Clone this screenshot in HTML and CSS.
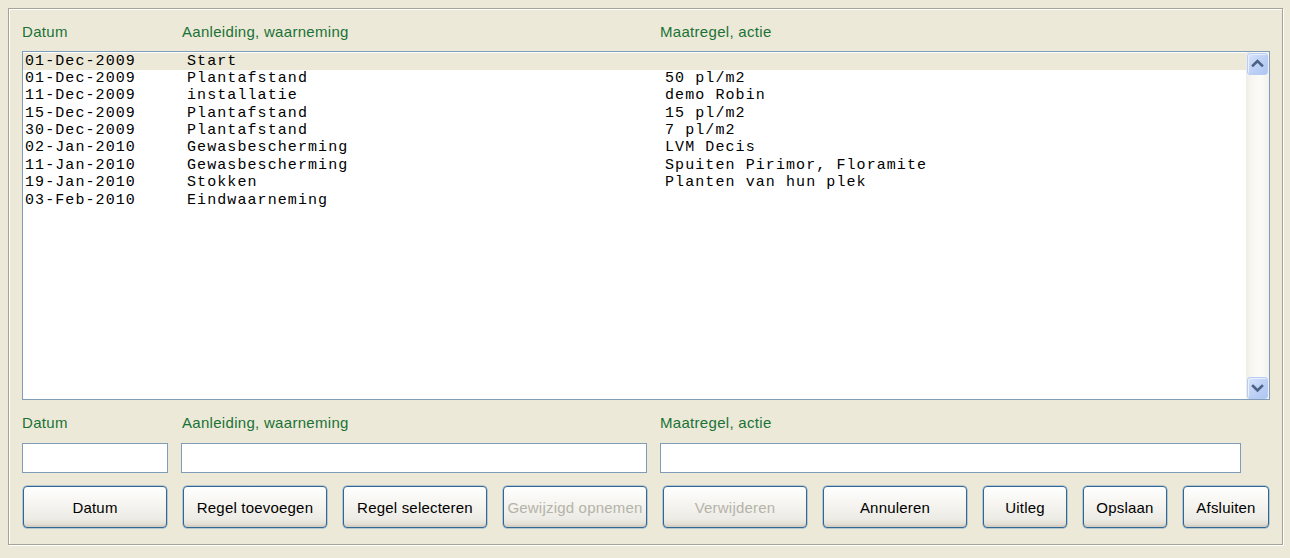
FILE: index.html
```html
<!DOCTYPE html>
<html>
<head>
<meta charset="utf-8">
<link rel="stylesheet" href="styles.css">
</head>
<body>
<div class="frame">
  <div class="labels head">
    <span class="lbl c1">Datum</span>
    <span class="lbl c2">Aanleiding, waarneming</span>
    <span class="lbl c3">Maatregel, actie</span>
  </div>
  <div class="list">
    <div class="rows">
      <div class="row sel"><span>01-Dec-2009</span><span>Start</span><span></span></div>
      <div class="row"><span>01-Dec-2009</span><span>Plantafstand</span><span>50 pl/m2</span></div>
      <div class="row"><span>11-Dec-2009</span><span>installatie</span><span>demo Robin</span></div>
      <div class="row"><span>15-Dec-2009</span><span>Plantafstand</span><span>15 pl/m2</span></div>
      <div class="row"><span>30-Dec-2009</span><span>Plantafstand</span><span>7 pl/m2</span></div>
      <div class="row"><span>02-Jan-2010</span><span>Gewasbescherming</span><span>LVM Decis</span></div>
      <div class="row"><span>11-Jan-2010</span><span>Gewasbescherming</span><span>Spuiten Pirimor, Floramite</span></div>
      <div class="row"><span>19-Jan-2010</span><span>Stokken</span><span>Planten van hun plek</span></div>
      <div class="row"><span>03-Feb-2010</span><span>Eindwaarneming</span><span></span></div>
    </div>
    <div class="scroll">
      <div class="sbtn"><svg width="21" height="21" viewBox="0 0 21 21"><polyline points="6,12.5 10.5,8 15,12.5" fill="none" stroke="#4D6185" stroke-width="2.6" stroke-linecap="square"/></svg></div>
      <div class="sbtn"><svg width="21" height="21" viewBox="0 0 21 21"><polyline points="6,9 10.5,13.5 15,9" fill="none" stroke="#4D6185" stroke-width="2.6" stroke-linecap="square"/></svg></div>
    </div>
  </div>
  <div class="labels low">
    <span class="lbl c1">Datum</span>
    <span class="lbl c2">Aanleiding, waarneming</span>
    <span class="lbl c3">Maatregel, actie</span>
  </div>
  <div class="inputs">
    <input class="field f1" type="text">
    <input class="field f2" type="text">
    <input class="field f3" type="text">
  </div>
  <div class="buttons">
    <button class="btn wide">Datum</button>
    <button class="btn wide">Regel toevoegen</button>
    <button class="btn wide">Regel selecteren</button>
    <button class="btn wide dis">Gewijzigd opnemen</button>
    <button class="btn wide dis">Verwijderen</button>
    <button class="btn wide">Annuleren</button>
    <button class="btn small">Uitleg</button>
    <button class="btn small">Opslaan</button>
    <button class="btn smallw">Afsluiten</button>
  </div>
</div>
</body>
</html>
```
FILE: styles.css
```css
html, body {
  margin: 0;
  padding: 0;
  background: #ECE9D8;
}
body {
  padding: 8px;
  font-family: "Liberation Sans", Arial, sans-serif;
}
.frame {
  box-sizing: border-box;
  width: 1275px;
  height: 537px;
  border: 1px solid #A5A497;
  box-shadow: 1px 1px 0 #FFFFFF, inset 1px 1px 0 #FFFFFF;
  padding: 0 12px 0 13px;
}
.labels {
  display: flex;
  height: 18px;
}
.head {
  margin-top: 14px;
}
.low {
  margin-top: 14px;
}
.lbl {
  font-size: 15px;
  line-height: 18px;
  letter-spacing: 0.3px;
  color: #1A7236;
  white-space: nowrap;
}
.lbl.c1 { width: 160px; }
.lbl.c2 { width: 478px; }
.list {
  margin-top: 10px;
  box-sizing: border-box;
  height: 349px;
  border: 1px solid #7F9DB9;
  background: #FFFFFF;
  display: flex;
}
.rows {
  flex: 1;
  padding-top: 0.5px;
}
.row {
  display: grid;
  grid-template-columns: 162px 478px 1fr;
  padding-left: 2px;
  height: 17.4px;
  line-height: 17.4px;
  font-family: "Liberation Mono", "Courier New", monospace;
  font-size: 15px;
  letter-spacing: 1.08px;
  color: #000;
  white-space: pre;
}
.row.sel {
  background: #ECE9D8;
}
.scroll {
  width: 23px;
  display: flex;
  flex-direction: column;
  justify-content: space-between;
  background: linear-gradient(to right, #EEEDE6 0%, #F7F6F1 25%, #FBFBF9 60%, #F3F2EC 100%);
}
.sbtn {
  box-sizing: border-box;
  width: 21px;
  height: 22px;
  margin: 1px 1px 0 1px;
  border: 1px solid #B8CCF3;
  border-radius: 3px;
  background: linear-gradient(135deg, #D6E3FB 0%, #BFD2F6 50%, #AEC6F2 100%);
  box-shadow: inset 1px 1px 0 #E8F0FE;
}
.sbtn svg {
  display: block;
  margin: -1px 0 0 -1px;
}
.inputs {
  display: flex;
  margin-top: 11px;
}
.field {
  box-sizing: border-box;
  height: 30px;
  margin: 0;
  border: 1px solid #7F9DB9;
  background: #FFFFFF;
  padding: 0;
  outline: none;
}
.f1 { width: 146px; margin-right: 13px; }
.f2 { width: 466px; margin-right: 13px; }
.f3 { width: 581px; }
.buttons {
  display: flex;
  gap: 16px;
  margin-top: 13px;
  padding-left: 1px;
}
.btn {
  box-sizing: border-box;
  height: 42px;
  margin: 0;
  padding: 0;
  border: 1px solid #2F6797;
  border-radius: 4px;
  background: linear-gradient(to bottom, #FFFFFF 0%, #F6F5F1 40%, #ECEBE5 80%, #DCD8CD 100%);
  box-shadow: inset 0 -2px 0 #D6D0C4, 0 0 0 0.5px #7EA3C4;
  font-family: "Liberation Sans", Arial, sans-serif;
  font-size: 15px;
  font-weight: 400;
  letter-spacing: 0.2px;
  color: #000000;
  white-space: nowrap;
}
.btn.wide { width: 144px; }
.btn.small { width: 84px; }
.btn.smallw { width: 86px; }
.btn.dis {
  color: #B5B3A8;
}
```
